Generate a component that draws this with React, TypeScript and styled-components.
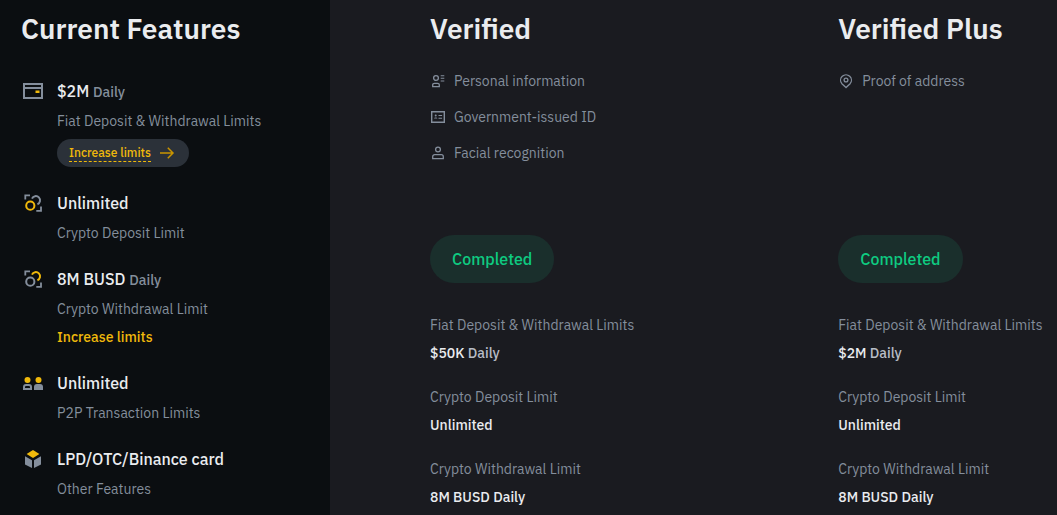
import React from "react";
import styled, { createGlobalStyle } from "styled-components";

const slate = "#848e9c";
const gold = "#f0b90b";
const bright = "#eaecef";

const GlobalStyle = createGlobalStyle`
  *, *::before, *::after { box-sizing: border-box; }
  body {
    margin: 0;
    background: #1a1b20;
    color: ${bright};
    font-family: "IBM Plex Sans", Roboto, "Noto Sans", sans-serif;
    font-size: 14px;
    line-height: 20px;
  }
  h2, p, ul, dl, dd { margin: 0; padding: 0; }
  ul { list-style: none; }
`;

const Page = styled.div`
  display: flex;
  min-height: 100vh;
`;

const Sidebar = styled.aside`
  flex: 0 0 330px;
  padding: 11px 21px 8px;
  background: #0b0e11;
`;

const Levels = styled.main`
  flex: 1;
  display: grid;
  grid-template-columns: 28fr 15fr;
  padding: 11px 0 8px 100px;
`;

const Heading = styled.h2`
  font-size: 28px;
  font-weight: 600;
  line-height: 36px;
  white-space: nowrap;
`;

const FeatureList = styled.ul`
  display: flex;
  flex-direction: column;
  gap: 24px;
  margin-top: 32px;
`;

const Feature = styled.li`
  display: flex;
  gap: 12px;
`;

const FeatureBody = styled.div`
  display: flex;
  flex-direction: column;
  align-items: flex-start;
  gap: 8px;
`;

const FeatureTitle = styled.p`
  font-size: 16px;
  font-weight: 500;
  line-height: 24px;
`;

const Period = styled.span`
  color: ${slate};
  font-size: 14px;
  line-height: 20px;
`;

const Muted = styled.p`
  color: ${slate};
  white-space: nowrap;
`;

const PillButton = styled.button`
  display: flex;
  align-items: center;
  gap: 8px;
  height: 28px;
  padding: 0 14px 0 12px;
  border: 0;
  border-radius: 14px;
  background: #2b3139;
  color: ${gold};
  font: 500 12px/16px "IBM Plex Sans", Roboto, "Noto Sans", sans-serif;
  cursor: pointer;
`;

const Dashed = styled.span`
  border-bottom: 1px dashed ${gold};
`;

const TextLink = styled.a`
  color: ${gold};
  font-weight: 500;
  text-decoration: none;
`;

const Requirements = styled.ul`
  display: flex;
  flex-direction: column;
  gap: 16px;
  min-height: 140px;
  margin: 24px 0;
`;

const Requirement = styled.li`
  display: flex;
  align-items: center;
  gap: 8px;
  color: ${slate};
`;

const StatusButton = styled.button`
  height: 48px;
  padding: 0 22px;
  border: 0;
  border-radius: 24px;
  background: #1a2f2c;
  color: #0ecb81;
  font: 500 16px/24px "IBM Plex Sans", Roboto, "Noto Sans", sans-serif;
`;

const Limits = styled.dl`
  display: flex;
  flex-direction: column;
  gap: 24px;
  margin-top: 32px;
`;

const LimitName = styled.dt`
  color: ${slate};
  white-space: nowrap;
`;

const LimitValue = styled.dd`
  padding-top: 8px;
  font-weight: 500;
`;

const Soft = styled.span`
  color: #b7bdc6;
`;

const Icon = styled.svg<{ $size: number }>`
  flex: none;
  display: block;
  width: ${(p) => p.$size}px;
  height: ${(p) => p.$size}px;
  fill: none;
`;

const WalletIcon = () => (
  <Icon $size={24} viewBox="0 0 24 24" aria-hidden="true">
    <path d="M3 5h18v14H3zM3 9h18" stroke={slate} strokeWidth="2" />
    <path d="M14.500 11.500h4v2.500h-4z" fill={gold} />
  </Icon>
);

const CryptoIcon = ({ ring, arc }: { ring: string; arc: string }) => (
  <Icon $size={24} viewBox="0 0 24 24" aria-hidden="true">
    <path d="M4.3 8.5V4.3H9M20 15.5v4.3h-4.7" stroke={slate} strokeWidth="1.8" />
    <circle cx="9.3" cy="14.7" r="4.1" stroke={ring} strokeWidth="2" />
    <path d="M11 7.6A4.2 4.2 0 1 1 16.4 13.2" stroke={arc} strokeWidth="2" />
  </Icon>
);

const PeopleIcon = () => (
  <Icon $size={24} viewBox="0 0 24 24" aria-hidden="true">
    <circle cx="6.5" cy="9" r="3" fill={gold} />
    <circle cx="17.5" cy="9" r="3" fill={gold} />
    <path
      d="M2 19v-3a3 3 0 0 1 3-3h3a3 3 0 0 1 3 3v3zM4 17h5v-1a1 1 0 0 0-1-1H5a1 1 0 0 0-1 1z"
      fill={slate}
      fillRule="evenodd"
    />
    <path d="M13 19v-3a3 3 0 0 1 3-3h3a3 3 0 0 1 3 3v3z" fill={slate} />
  </Icon>
);

const CubeIcon = () => (
  <Icon $size={24} viewBox="0 0 24 24" aria-hidden="true">
    <path d="M12 3l6.4 3.9L12 10.9 5.600 6.900z" fill={gold} />
    <path d="M4 9.200l7 4v7.800l-7-3.600zM20 9.200l-7 4v7.800l7-3.600z" fill={slate} />
  </Icon>
);

const ArrowIcon = () => (
  <Icon $size={16} viewBox="0 0 16 16" aria-hidden="true">
    <path d="M1 8h13M8.800 2.800L14 8l-5.200 5.200" stroke="#c99400" strokeWidth="1.5" />
  </Icon>
);

const PersonalIcon = () => (
  <Icon $size={16} viewBox="0 0 16 16" aria-hidden="true">
    <g stroke={slate} strokeWidth="1.3">
      <circle cx="6" cy="5" r="2.400" />
      <path d="M2.700 13.700v-1.700a1.700 1.700 0 0 1 1.700-1.700h3.200a1.700 1.700 0 0 1 1.700 1.700v1.700z" />
      <path d="M10.700 2.700h3.600M10.700 5.300h3.600M10.700 8h3.600" strokeWidth="1.100" />
    </g>
  </Icon>
);

const IdCardIcon = () => (
  <Icon $size={16} viewBox="0 0 16 16" aria-hidden="true">
    <path d="M1.700 2.700h12.600v10.600H1.700z" stroke={slate} strokeWidth="1.400" />
    <circle cx="5.700" cy="6.600" r="1" fill={slate} />
    <path d="M4 9.600c0-1.600 3.400-1.600 3.400 0zM8.500 6h3.600v1.100H8.500zM8.500 8.700h3.600v1.100H8.500z" fill={slate} />
  </Icon>
);

const FaceIcon = () => (
  <Icon $size={16} viewBox="0 0 16 16" aria-hidden="true">
    <g stroke={slate} strokeWidth="1.3">
      <circle cx="8" cy="4.500" r="2.400" />
      <path d="M2.700 13.700v-2a2 2 0 0 1 2-2h6.600a2 2 0 0 1 2 2v2z" />
    </g>
  </Icon>
);

const PinIcon = () => (
  <Icon $size={16} viewBox="0 0 16 16" aria-hidden="true">
    <g stroke={slate} strokeWidth="1.3">
      <path d="M8 14.500L3.900 10.700a5.400 5.400 0 1 1 8.200 0z" />
      <circle cx="8" cy="7" r="1.900" />
    </g>
  </Icon>
);

interface LimitEntry {
  name: string;
  amount: string;
  period?: string;
}

interface LevelProps {
  title: string;
  requirements: { icon: React.ReactNode; text: string }[];
  limits: LimitEntry[];
}

const Level = ({ title, requirements, limits }: LevelProps) => (
  <section>
    <Heading>{title}</Heading>
    <Requirements>
      {requirements.map((r) => (
        <Requirement key={r.text}>
          {r.icon}
          {r.text}
        </Requirement>
      ))}
    </Requirements>
    <StatusButton type="button">Completed</StatusButton>
    <Limits>
      {limits.map((l) => (
        <div key={l.name}>
          <LimitName>{l.name}</LimitName>
          <LimitValue>
            {l.amount}
            {l.period && <Soft> {l.period}</Soft>}
          </LimitValue>
        </div>
      ))}
    </Limits>
  </section>
);

const limitsFor = (fiat: string): LimitEntry[] => [
  { name: "Fiat Deposit & Withdrawal Limits", amount: fiat, period: "Daily" },
  { name: "Crypto Deposit Limit", amount: "Unlimited" },
  { name: "Crypto Withdrawal Limit", amount: "8M BUSD Daily" },
];

export default function App() {
  return (
    <>
      <GlobalStyle />
      <Page>
        <Sidebar>
          <Heading>Current Features</Heading>
          <FeatureList>
            <Feature>
              <WalletIcon />
              <FeatureBody>
                <FeatureTitle>
                  $2M <Period>Daily</Period>
                </FeatureTitle>
                <Muted>Fiat Deposit &amp; Withdrawal Limits</Muted>
                <PillButton type="button">
                  <Dashed>Increase limits</Dashed>
                  <ArrowIcon />
                </PillButton>
              </FeatureBody>
            </Feature>
            <Feature>
              <CryptoIcon ring={gold} arc={slate} />
              <FeatureBody>
                <FeatureTitle>Unlimited</FeatureTitle>
                <Muted>Crypto Deposit Limit</Muted>
              </FeatureBody>
            </Feature>
            <Feature>
              <CryptoIcon ring={slate} arc={gold} />
              <FeatureBody>
                <FeatureTitle>
                  8M BUSD <Period>Daily</Period>
                </FeatureTitle>
                <Muted>Crypto Withdrawal Limit</Muted>
                <TextLink href="#limits">Increase limits</TextLink>
              </FeatureBody>
            </Feature>
            <Feature>
              <PeopleIcon />
              <FeatureBody>
                <FeatureTitle>Unlimited</FeatureTitle>
                <Muted>P2P Transaction Limits</Muted>
              </FeatureBody>
            </Feature>
            <Feature>
              <CubeIcon />
              <FeatureBody>
                <FeatureTitle>LPD/OTC/Binance card</FeatureTitle>
                <Muted>Other Features</Muted>
              </FeatureBody>
            </Feature>
          </FeatureList>
        </Sidebar>
        <Levels>
          <Level
            title="Verified"
            requirements={[
              { icon: <PersonalIcon />, text: "Personal information" },
              { icon: <IdCardIcon />, text: "Government-issued ID" },
              { icon: <FaceIcon />, text: "Facial recognition" },
            ]}
            limits={limitsFor("$50K")}
          />
          <Level
            title="Verified Plus"
            requirements={[{ icon: <PinIcon />, text: "Proof of address" }]}
            limits={limitsFor("$2M")}
          />
        </Levels>
      </Page>
    </>
  );
}
